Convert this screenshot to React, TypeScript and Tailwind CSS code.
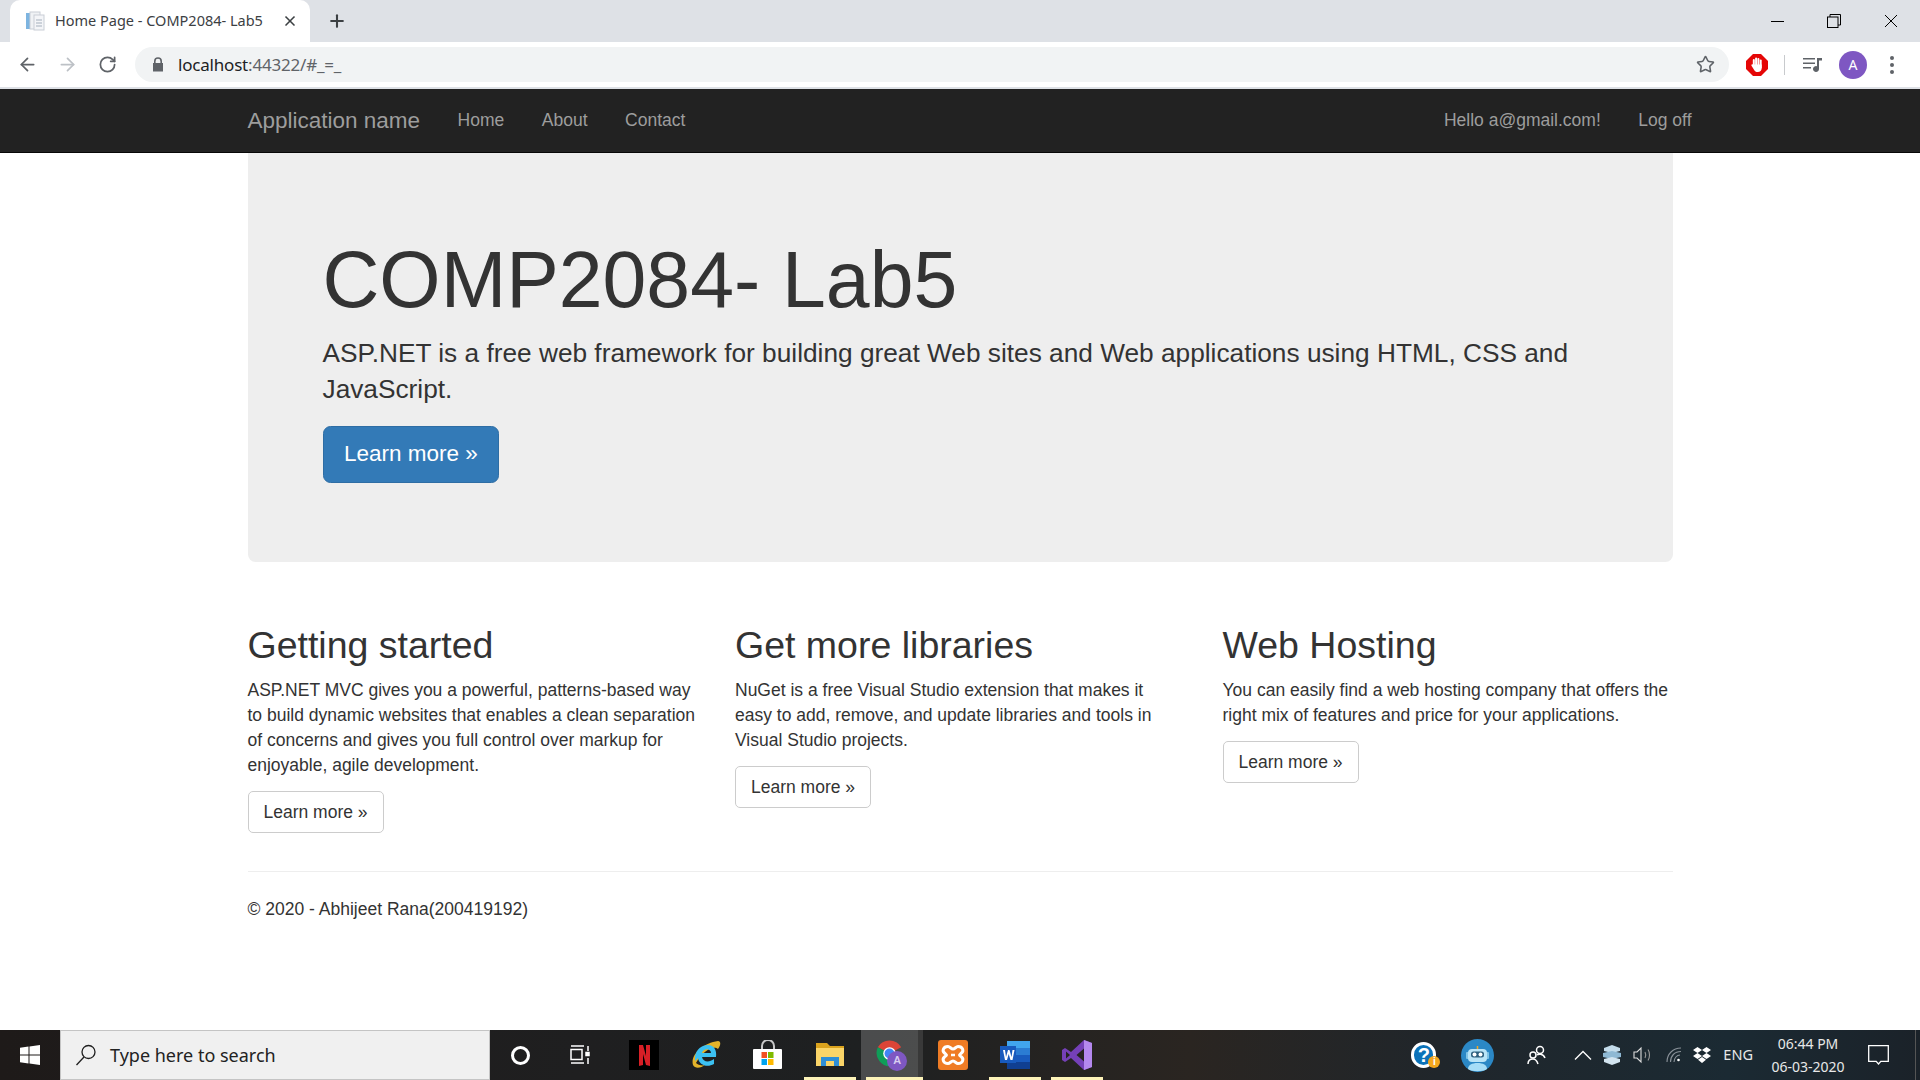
import { ArrowLeft, ArrowRight, Plus, RotateCw, Star, X } from "lucide-react";

const columns = [
  {
    title: "Getting started",
    lines: [
      "ASP.NET MVC gives you a powerful, patterns-based way",
      "to build dynamic websites that enables a clean separation",
      "of concerns and gives you full control over markup for",
      "enjoyable, agile development.",
    ],
  },
  {
    title: "Get more libraries",
    lines: [
      "NuGet is a free Visual Studio extension that makes it",
      "easy to add, remove, and update libraries and tools in",
      "Visual Studio projects.",
    ],
  },
  {
    title: "Web Hosting",
    lines: [
      "You can easily find a web hosting company that offers the",
      "right mix of features and price for your applications.",
    ],
  },
];

const Favicon = () => (
  <svg width="20" height="20" viewBox="0 0 20 20">
    <rect x="1" y="2" width="4" height="16" fill="#7db4e0" />
    <rect x="5" y="1" width="10" height="17" fill="#f0f2f5" stroke="#c9ced6" />
    <rect x="9" y="4" width="10" height="15" fill="#f4f5f8" stroke="#c9ced6" />
    <path d="M11 9h6M11 12h6M11 15h6" stroke="#bfc6d0" strokeWidth="1.5" />
  </svg>
);

const ChromeBar = () => (
  <>
    <div className="flex h-[42px] items-end bg-[#dee1e6]">
      <div className="ml-[10px] flex h-[42px] w-[300px] items-center rounded-t-[10px] bg-white pl-[15px] pr-[12px]">
        <Favicon />
        <span className="ml-[10px] flex-1 font-['Noto_Sans',sans-serif] text-[14.5px] whitespace-nowrap text-[#3c4043]">
          Home Page - COMP2084- Lab5
        </span>
        <X size={16} strokeWidth={2.5} className="text-[#3c4043]" />
      </div>
      <div className="flex h-[42px] w-[54px] items-center justify-center">
        <Plus size={20} strokeWidth={2.5} className="text-[#3c4043]" />
      </div>
      <div className="ml-auto flex h-[42px] items-center">
        <div className="flex w-[58px] justify-center">
          <div className="h-px w-[13px] bg-black" />
        </div>
        <div className="flex w-[56px] justify-center">
          <svg width="14" height="14" viewBox="0 0 14 14" fill="none" stroke="#000">
            <rect x="0.5" y="3" width="10.5" height="10.5" />
            <path d="M3 3V.5h10.5V11H11" />
          </svg>
        </div>
        <div className="flex w-[58px] justify-center">
          <svg width="14" height="14" viewBox="0 0 14 14" stroke="#000" fill="none">
            <path d="M1 1l12 12M13 1L1 13" />
          </svg>
        </div>
      </div>
    </div>
    <div className="flex h-[47px] items-center border-b-2 border-[#dee1e6] bg-white">
      <div className="flex w-[135px] items-center text-[#5f6368]">
        <div className="flex w-[54px] justify-center">
          <ArrowLeft size={21} strokeWidth={2} />
        </div>
        <div className="flex w-[26px] justify-center text-[#bdc1c6]">
          <ArrowRight size={21} strokeWidth={2} />
        </div>
        <div className="flex w-[55px] justify-center">
          <RotateCw size={19} strokeWidth={2.2} />
        </div>
      </div>
      <div className="flex h-[35px] w-[1594px] items-center rounded-full bg-[#f1f3f4] pl-[17px] pr-[14px]">
        <svg width="12" height="15" viewBox="0 0 12 15" fill="#5f6368">
          <path d="M2 6V4.2a4 4 0 018 0V6h1v8.5H1V6zm1.600 0h4.800V4.200a2.400 2.400 0 00-4.800 0z" />
        </svg>
        <span className="ml-[14px] font-['Noto_Sans',sans-serif] text-[17px] leading-none tracking-[-0.2px] text-[#5f6368]">
          <span className="text-[#202124]">localhost</span>:44322/#_=_
        </span>
        <Star size={19} strokeWidth={2} className="ml-auto text-[#5f6368]" />
      </div>
      <div className="flex flex-1 items-center">
        <div className="ml-[17px] flex w-[22px] justify-center">
          <svg width="22" height="22" viewBox="0 0 22 22">
            <path d="M7 0h8l7 7v8l-7 7H7l-7-7V7z" fill="#e50606" />
            <g fill="#fff">
              <rect x="6.800" y="5" width="2" height="8" rx="1" />
              <rect x="9.100" y="3.500" width="2" height="9" rx="1" />
              <rect x="11.400" y="4" width="2" height="9" rx="1" />
              <rect x="13.700" y="5.500" width="2" height="9" rx="1" />
              <path d="M6.800 10.500h8.900v3.500c0 2.400-1.600 4-3.900 4-1.900 0-3-.8-3.800-2.300l-2.500-4c-.5-1 .8-1.900 1.500-1z" />
            </g>
          </svg>
        </div>
        <div className="ml-[16px] h-[20px] w-px bg-[#c8cacd]" />
        <div className="ml-[18px] flex w-[20px]">
          <svg width="20" height="16" viewBox="0 0 20 16" fill="#5f6368">
            <path d="M0 1h12v1.600H0zM0 5.500h12v1.600H0zM0 10h8v1.600H0z" />
            <path d="M14 1h5v2.400h-3V12a3 3 0 11-2-2.800z" />
          </svg>
        </div>
        <div className="ml-[16px] flex h-[28px] w-[28px] items-center justify-center rounded-full bg-[#7e57c2] font-['Noto_Sans',sans-serif] text-[14px] text-white">
          A
        </div>
        <div className="ml-[23px] flex flex-col gap-[3px]">
          <span className="h-[4px] w-[4px] rounded-full bg-[#5f6368]" />
          <span className="h-[4px] w-[4px] rounded-full bg-[#5f6368]" />
          <span className="h-[4px] w-[4px] rounded-full bg-[#5f6368]" />
        </div>
      </div>
    </div>
  </>
);

const Netflix = () => (
  <svg width="30" height="30" viewBox="0 0 30 30">
    <rect width="30" height="30" fill="#000" />
    <path d="M10 5h4l3 11V5h4v21l-4-1-3-11v11l-4 1z" fill="#d81f26" />
  </svg>
);

const Edge = () => (
  <svg width="30" height="30" viewBox="0 0 30 30">
    <path d="M2 25C-1 15 12 3 27 1c3 0 3 4 0 8-4-4-15 1-22 14 2 2 6 3 9 2-4 3-10 4-12 0z" fill="#e3b32a" />
    <path
      d="M4 17C5 9 11 5 17 5c6 0 9 5 8 12H11c1 5 7 6 12 2v5c-7 4-15 1-16-6l-3 3zm7-4h9c0-5-8-5-9 0z"
      fill="#3cc1f2"
    />
  </svg>
);

const Store = () => (
  <svg width="30" height="30" viewBox="0 0 30 30">
    <path d="M9 9V6a6 6 0 0112 0v3" fill="none" stroke="#c8c8c8" strokeWidth="2" />
    <rect y="9" width="29" height="20" rx="1" fill="#fff" />
    <rect x="8.500" y="12" width="5.500" height="6" fill="#f25022" />
    <rect x="15" y="12" width="5.500" height="6" fill="#7fba00" />
    <rect x="8.500" y="19" width="5.500" height="6" fill="#00a4ef" />
    <rect x="15" y="19" width="5.500" height="6" fill="#ffb900" />
  </svg>
);

const Explorer = () => (
  <svg width="28" height="26" viewBox="0 0 28 26">
    <path d="M0 1h11l3 3h14v20H0z" fill="#dba31d" />
    <rect y="6" width="28" height="18" fill="#fbd568" />
    <path d="M5 24v-9h18v9h-5v-5h-8v5z" fill="#2f8fd6" />
  </svg>
);

const ChromeIcon = () => (
  <div className="relative h-[31px] w-[31px]">
    <svg width="27" height="27" viewBox="0 0 30 30">
      <path d="M15 15 2 8a15 15 0 0126 0z" fill="#db4437" />
      <path d="M15 15H28a15 15 0 01-10 14z" fill="#f4b400" />
      <path d="M15 15 18 29A15 15 0 012 8z" fill="#0f9d58" />
      <circle cx="15" cy="15" r="7" fill="#fff" />
      <circle cx="15" cy="15" r="5.500" fill="#4285f4" />
    </svg>
    <div className="absolute top-[11px] left-[11px] flex h-[20px] w-[20px] items-center justify-center rounded-full bg-[#7e57c2] font-['Noto_Sans',sans-serif] text-[11px] font-semibold text-[#d9cdf0]">
      A
    </div>
  </div>
);

const Xampp = () => (
  <svg width="30" height="30" viewBox="0 0 30 30">
    <rect width="30" height="30" rx="3" fill="#ef7c25" />
    <path
      d="M10 6.500C12 6.500 13 9 15 9S18 6.500 20 6.500C25 6.500 26 11 23.500 13 22.300 14 21.500 14.500 21.500 15S22.300 16 23.500 17C26 19 25 23.500 20 23.500 18 23.500 17 21 15 21S12 23.500 10 23.500C5 23.500 4 19 6.500 17 7.700 16 8.500 15.500 8.500 15S7.700 14 6.500 13C4 11 5 6.500 10 6.500Z"
      fill="none"
      stroke="#fff"
      strokeWidth="3"
    />
    <path d="M13 15h4" stroke="#fff" strokeWidth="2.500" />
  </svg>
);

const Word = () => (
  <svg width="30" height="28" viewBox="0 0 30 28">
    <rect x="7" y="0" width="23" height="7" fill="#41a5ee" />
    <rect x="7" y="7" width="23" height="7" fill="#2b7cd3" />
    <rect x="7" y="14" width="23" height="7" fill="#185abd" />
    <rect x="7" y="21" width="23" height="7" fill="#103f91" />
    <rect y="5" width="16" height="17" fill="#185abd" />
    <path d="M3 9h2l1 7 2-7h1.500l2 7 1-7h2l-2 10h-2l-1.800-6L7 19H5z" fill="#fff" />
  </svg>
);

const VisualStudio = () => (
  <svg width="30" height="30" viewBox="0 0 30 30">
    <path d="M22 0 30 3v24l-8 3-13-12-6 4-3-2V10l3-2 6 4zM4 11.500v7L8 15zm18-3L14.500 15 22 21.500z" fill="#7540b8" />
    <path d="M22 0l8 3v24l-8 3z" fill="#b488ee" />
  </svg>
);

const HelpIcon = () => (
  <div className="relative h-[27px] w-[29px]">
    <div className="flex h-[26px] w-[25px] items-center justify-center rounded-full border-[3px] border-white bg-[#0b72b9] font-['Liberation_Sans',sans-serif] text-[20px] font-bold text-white">
      ?
    </div>
    <div className="absolute right-0 bottom-[1px] flex h-[12px] w-[12px] items-center justify-center rounded-full bg-[#f4a71d] font-['Liberation_Sans',sans-serif] text-[10px] font-bold text-white">
      i
    </div>
  </div>
);

const BotIcon = () => (
  <svg width="33" height="33" viewBox="0 0 33 33">
    <circle cx="16.500" cy="16.500" r="16.500" fill="#2b88c6" />
    <path d="M7 30C7 26 11 24 16.500 24S26 26 26 30C23 33 10 33 7 30z" fill="#a6ddf7" />
    <rect x="5" y="13" width="3" height="7" rx="1" fill="#7fc3e6" />
    <rect x="25" y="13" width="3" height="7" rx="1" fill="#7fc3e6" />
    <rect x="7" y="10" width="19" height="13" rx="4" fill="#b9e4f7" />
    <rect x="10" y="12.500" width="13" height="6" rx="2.500" fill="#2e607f" />
    <circle cx="13.500" cy="15.500" r="2" fill="#fff" />
    <circle cx="19.500" cy="15.500" r="2" fill="#fff" />
    <path d="M16.500 10V7" stroke="#f4a71d" strokeWidth="1.500" />
  </svg>
);

const StackIcon = () => (
  <svg width="18" height="20" viewBox="0 0 18 20">
    <path d="M1 3 9 0l8 3v3l-8 2-8-2z" fill="#c3dceb" />
    <path d="M0 8l9-2 9 2v4l-9 2-9-2z" fill="#8fb9d4" />
    <path d="M1 14l8-2 8 2v3l-8 3-8-3z" fill="#d3e5f0" />
  </svg>
);

const TaskButton = ({
  children,
  underline,
  active,
}: {
  children: React.ReactNode;
  underline?: boolean;
  active?: boolean;
}) => (
  <div
    className={`relative flex h-[50px] w-[61.800px] items-center justify-center ${
      active ? "bg-white/20" : ""
    }`}
  >
    {children}
    {active && <div className="absolute inset-y-0 right-0 w-[5px] bg-black/25" />}
    {underline && (
      <div className={`absolute bottom-0 left-[5px] h-[3px] bg-[#fdf3b8] ${active ? "right-0" : "right-[5px]"}`} />
    )}
  </div>
);

const Taskbar = () => (
  <div className="flex h-[50px] items-center bg-[linear-gradient(90deg,#1e1a19_0%,#1f1f20_30%,#1e2021_45%,#2a2521_62%,#20262b_75%,#1b2a33_90%,#1b2229_100%)]">
    <div className="flex w-[60px] justify-center">
      <svg width="20" height="20" viewBox="0 0 20 20" fill="#fff">
        <path d="M0 2.800 8.500 1.600V9.500H0zM9.500 1.500 20 0V9.500H9.500zM0 10.500h8.500v7.900L0 17.200zM9.500 10.500H20V20L9.500 18.500z" />
      </svg>
    </div>
    <div className="flex h-[50px] w-[430px] items-center border border-[#c4c4c4] bg-[#f0f0f0] pl-[14px]">
      <svg width="22" height="22" viewBox="0 0 22 22" fill="none" stroke="#1f1f1f" strokeWidth="1.300">
        <circle cx="13.500" cy="8" r="6.500" />
        <path d="M9 13 1.500 21" />
      </svg>
      <span className="ml-[13px] font-['Noto_Sans',sans-serif] text-[18px] text-[#222]">
        Type here to search
      </span>
    </div>
    <TaskButton>
      <div className="h-[19px] w-[19px] rounded-full border-[3px] border-white" />
    </TaskButton>
    <TaskButton>
      <svg className="mr-[6px]" width="20" height="20" viewBox="0 0 20 20" fill="none" stroke="#fff" strokeWidth="1.500">
        <path d="M1 1h13M1 18h13" />
        <rect x="1" y="4.500" width="11" height="10" />
        <path d="M18 1v5M18 13v6" />
        <rect x="16" y="7.500" width="3" height="3" fill="#fff" />
      </svg>
    </TaskButton>
    <TaskButton>
      <Netflix />
    </TaskButton>
    <TaskButton>
      <Edge />
    </TaskButton>
    <TaskButton>
      <Store />
    </TaskButton>
    <TaskButton underline>
      <Explorer />
    </TaskButton>
    <TaskButton underline active>
      <ChromeIcon />
    </TaskButton>
    <TaskButton>
      <Xampp />
    </TaskButton>
    <TaskButton underline>
      <Word />
    </TaskButton>
    <TaskButton underline>
      <VisualStudio />
    </TaskButton>
    <div className="ml-auto flex h-[50px] items-center text-[#e8e8e8]">
      <HelpIcon />
      <div className="ml-[21px]">
        <BotIcon />
      </div>
      <svg className="ml-[33px]" width="20" height="20" viewBox="0 0 20 20" fill="none" stroke="#fff" strokeWidth="1.500">
        <circle cx="13" cy="5" r="3.500" />
        <circle cx="6" cy="10" r="3" />
        <path d="M1 19c0-3 2-5 5-5s4 2 5 5M10 10c1-1 6-2 8 3" />
      </svg>
      <svg className="ml-[27px]" width="18" height="10" viewBox="0 0 18 10" fill="none" stroke="#fff" strokeWidth="1.300">
        <path d="M1 9.500 9 1.500l8 8" />
      </svg>
      <div className="ml-[11px]">
        <StackIcon />
      </div>
      <svg className="ml-[12px]" width="22" height="18" viewBox="0 0 22 18" fill="none" stroke="#ddd" strokeWidth="1.100">
        <path d="M1 6h3l4-4v14l-4-4H1z" />
        <path d="M12 6c1 2 1 4 0 6M15 3.500c2 3 2 8 0 11" stroke="#999" />
      </svg>
      <svg className="ml-[11px]" width="16" height="16" viewBox="0 0 16 16" fill="none" stroke="#8a9299" strokeWidth="1.100">
        <path d="M1 15C1 7 7 1 15 1M4.500 15c0-6 4-10.500 10.500-10.500" />
        <path d="M8 15c0-4 3-7 6-7" />
        <circle cx="12.500" cy="13" r="1.300" fill="#fff" stroke="none" />
      </svg>
      <svg className="ml-[11px]" width="18" height="16" viewBox="0 0 18 16" fill="#fff">
        <path d="M4.500 0 9 3 4.500 6 0 3zM13.500 0 18 3l-4.500 3L9 3zM4.500 6 9 9l-4.500 3L0 9zM13.500 6 18 9l-4.500 3L9 9zM9 10l4 2.700L9 16l-4-3.300z" />
      </svg>
      <span className="ml-[12px] font-['Noto_Sans',sans-serif] text-[14.500px]">ENG</span>
      <div className="ml-[16px] flex w-[78px] flex-col items-center font-['Noto_Sans',sans-serif] text-[14px] leading-[23px]">
        <span>06:44 PM</span>
        <span>06-03-2020</span>
      </div>
      <svg className="ml-[21px]" width="21" height="20" viewBox="0 0 21 20" fill="none" stroke="#fff" strokeWidth="1.300">
        <path d="M.7.700h19.600v15.600h-7.500L10.500 19l-2.300-2.700H.7z" />
      </svg>
      <div className="ml-[26px] h-[50px] w-[5px] border-l border-[#555]" />
    </div>
  </div>
);

const Navbar = () => (
  <div className="flex h-[64px] border-b border-[#080808] bg-[#222] text-[#9d9d9d]">
    <div className="mx-auto flex w-[1425px] items-center">
      <span className="text-[22.500px]">Application name</span>
      <span className="ml-[37.500px] text-[17.500px]">Home</span>
      <span className="ml-[37.500px] text-[17.500px]">About</span>
      <span className="ml-[37.500px] text-[17.500px]">Contact</span>
      <div className="mr-[-19px] ml-auto flex items-center text-[17.500px]">
        <span>Hello a@gmail.com!</span>
        <span className="ml-[37.500px]">Log off</span>
      </div>
    </div>
  </div>
);

export default function App() {
  return (
    <div className="flex h-[1080px] w-[1920px] flex-col overflow-hidden bg-white font-['Liberation_Sans',Arial,sans-serif] text-[#333]">
      <ChromeBar />
      <Navbar />
      <main className="mx-auto w-[1425px] flex-1">
        <section className="mb-[37.500px] rounded-b-[7.500px] bg-[#eee] px-[75px] pt-[60px] pb-[79.600px]">
          <h1 className="mt-[24.400px] mb-[11.500px] text-[78.750px] leading-[86.600px]">COMP2084- Lab5</h1>
          <p className="mb-[18.250px] text-[26.250px] leading-[36px]">
            ASP.NET is a free web framework for building great Web sites and Web applications using HTML, CSS and
            JavaScript.
          </p>
          <a className="inline-block rounded-[7.500px] border border-[#2e6da4] bg-[#337ab7] px-[20.500px] py-[12.500px] text-[22.500px] leading-[30px] text-white">
            Learn more »
          </a>
        </section>
        <div className="flex w-[1462.500px]">
          {columns.map((col) => (
            <div key={col.title} className="w-[487.500px] shrink-0 pr-[37.500px]">
              <h2 className="mt-[25px] mb-[11.500px] text-[37.500px] leading-[41.250px]">{col.title}</h2>
              <p className="mb-[13.500px] text-[17.500px] leading-[25px] whitespace-nowrap">
                {col.lines.map((line) => (
                  <span key={line} className="block">
                    {line}
                  </span>
                ))}
              </p>
              <a className="inline-block rounded-[5px] border border-[#ccc] px-[15px] py-[7.500px] text-[17.500px] leading-[25px]">
                Learn more »
              </a>
            </div>
          ))}
        </div>
        <hr className="mt-[37.500px] mb-[25px] border-[#eee]" />
        <p className="text-[17.500px] leading-[25px]">© 2020 - Abhijeet Rana(200419192)</p>
      </main>
      <Taskbar />
    </div>
  );
}
